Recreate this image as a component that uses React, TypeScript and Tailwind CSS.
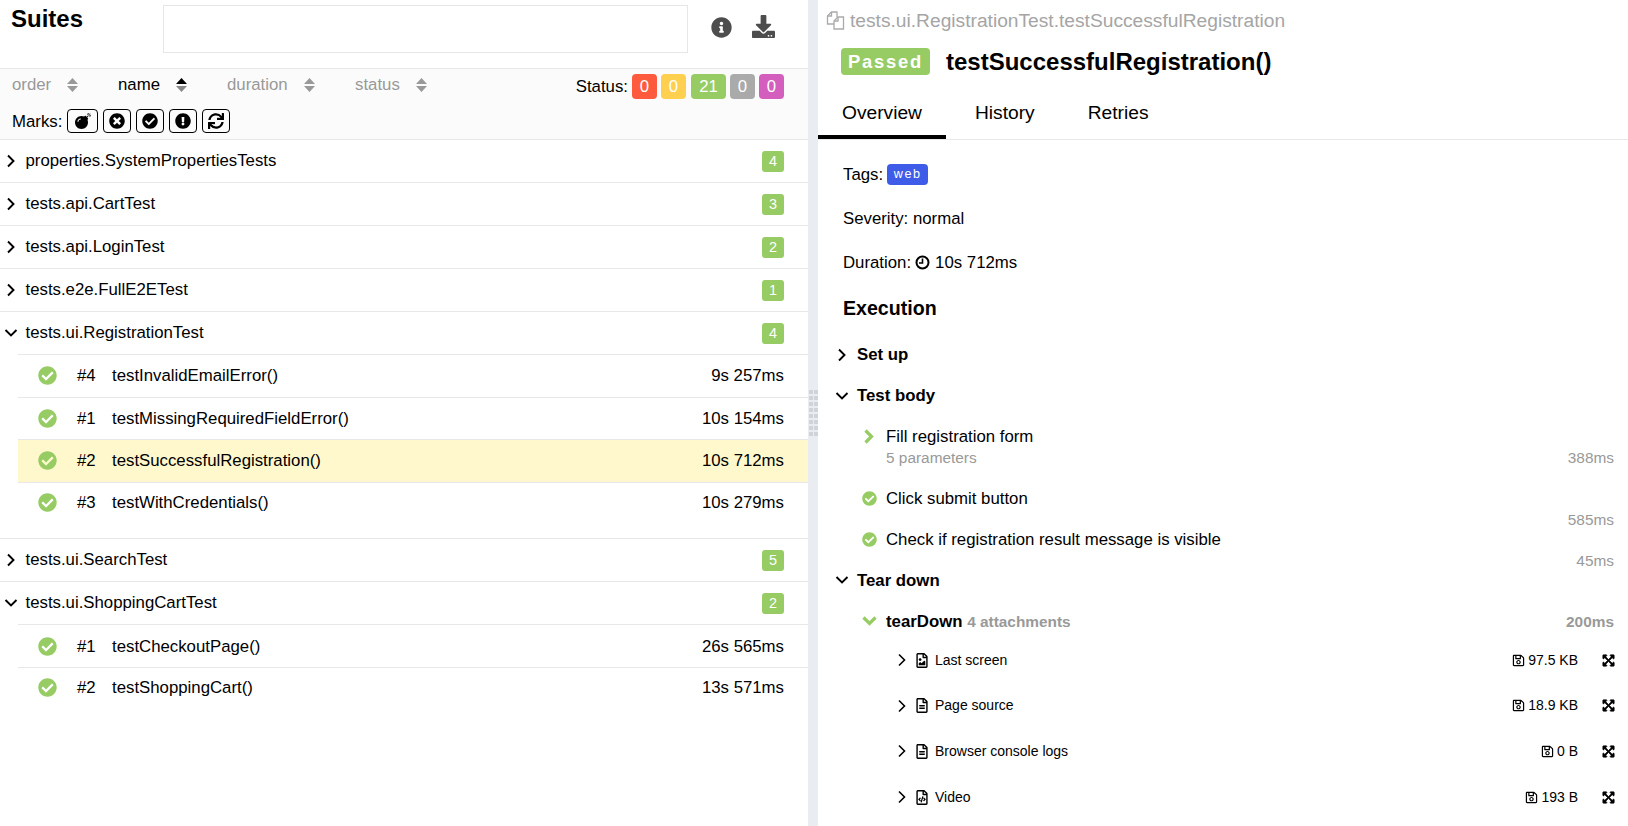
import {
  FaBomb,
  FaCheckCircle,
  FaDownload,
  FaExclamationCircle,
  FaExpandArrowsAlt,
  FaInfoCircle,
  FaRegFileAlt,
  FaRegFileCode,
  FaRegFileImage,
  FaRegSave,
  FaSync,
  FaTimesCircle,
} from 'react-icons/fa';
import type { IconType } from 'react-icons';

interface TestRow {
  order: string;
  name: string;
  duration: string;
  selected?: boolean;
}

interface Suite {
  name: string;
  count: number;
  tests?: TestRow[];
  extraSpace?: boolean;
}

const suites: Suite[] = [
  { name: 'properties.SystemPropertiesTests', count: 4 },
  { name: 'tests.api.CartTest', count: 3 },
  { name: 'tests.api.LoginTest', count: 2 },
  { name: 'tests.e2e.FullE2ETest', count: 1 },
  {
    name: 'tests.ui.RegistrationTest',
    count: 4,
    extraSpace: true,
    tests: [
      { order: '#4', name: 'testInvalidEmailError()', duration: '9s 257ms' },
      { order: '#1', name: 'testMissingRequiredFieldError()', duration: '10s 154ms' },
      { order: '#2', name: 'testSuccessfulRegistration()', duration: '10s 712ms', selected: true },
      { order: '#3', name: 'testWithCredentials()', duration: '10s 279ms' },
    ],
  },
  { name: 'tests.ui.SearchTest', count: 5 },
  {
    name: 'tests.ui.ShoppingCartTest',
    count: 2,
    tests: [
      { order: '#1', name: 'testCheckoutPage()', duration: '26s 565ms' },
      { order: '#2', name: 'testShoppingCart()', duration: '13s 571ms' },
    ],
  },
];

const sorters = [
  { label: 'order', className: 'w-[106px] pl-[12px]' },
  { label: 'name', active: true, className: 'w-[109px] pl-[12px]' },
  { label: 'duration', className: 'w-[128px] pl-[12px]' },
  { label: 'status', className: 'w-[100px] pl-[12px]' },
];

const statuses = [
  { value: '0', className: 'bg-[#fd5a3e] w-[25px]' },
  { value: '0', className: 'bg-[#ffd050] w-[25px]' },
  { value: '21', className: 'bg-[#97cc64] w-[35px] ml-[1px]' },
  { value: '0', className: 'bg-[#aaaaaa] w-[25px]' },
  { value: '0', className: 'bg-[#d35ebe] w-[25px]' },
];

const markIcons: { icon: IconType; className: string }[] = [
  { icon: FaBomb, className: 'w-[31px]' },
  { icon: FaTimesCircle, className: 'w-[28px]' },
  { icon: FaCheckCircle, className: 'w-[28px]' },
  { icon: FaExclamationCircle, className: 'w-[28px]' },
  { icon: FaSync, className: 'w-[28px]' },
];

const attachments = [
  { name: 'Last screen', size: '97.5 KB', icon: FaRegFileImage },
  { name: 'Page source', size: '18.9 KB', icon: FaRegFileAlt },
  { name: 'Browser console logs', size: '0 B', icon: FaRegFileAlt },
  { name: 'Video', size: '193 B', icon: FaRegFileCode },
];

function AngleRight({ thin }: { thin?: boolean }) {
  return (
    <svg viewBox="0 0 14 14" className="w-[14px] h-[14px] shrink-0" fill="none" stroke="currentColor" strokeWidth={thin ? 1.6 : 1.9}>
      <path d="M4 1.5 9.5 7 4 12.5" />
    </svg>
  );
}

function AngleDown() {
  return (
    <svg viewBox="0 0 14 14" className="w-[14px] h-[14px] shrink-0" fill="none" stroke="currentColor" strokeWidth={1.9}>
      <path d="M1.5 4 7 9.5 12.5 4" />
    </svg>
  );
}

function SortIcon({ active }: { active?: boolean }) {
  return (
    <svg viewBox="0 0 11 14" className="w-[11px] h-[14px] shrink-0">
      <path d="M5.5 0 11 6H0Z" fill={active ? '#000000' : '#999999'} />
      <path d="M5.5 14 0 8H11Z" fill={active ? '#888888' : '#999999'} />
    </svg>
  );
}

function FilesIcon() {
  return (
    <svg viewBox="0 0 19 19" className="w-[19px] h-[19px] shrink-0" fill="none" stroke="#aaaaaa" strokeWidth={1.3}>
      <path d="M8 13H1.5V5L5.5 1H11V6" />
      <path d="M5.5 1V5H1.5" />
      <path d="M8 10 12 6H17.5V18H8Z" />
      <path d="M12 6V10H8" />
    </svg>
  );
}

function ClockIcon() {
  return (
    <svg viewBox="0 0 15 15" className="ml-[4px] mr-[5px] w-[15px] h-[15px] shrink-0" fill="none" stroke="currentColor" strokeWidth={2}>
      <circle cx="7.5" cy="7.5" r="6" />
      <path d="M7.5 3.5V8H4" strokeWidth={1.6} />
    </svg>
  );
}

function SuiteRow({ suite }: { suite: Suite }) {
  return (
    <div className="border-b border-[#e8e8e8] last:border-b-0">
      <div className="flex h-[42px] items-center pb-[1px] pl-[4px] pr-[24px]">
        {suite.tests ? <AngleDown /> : <AngleRight />}
        <span className="ml-[7.5px] flex-1">{suite.name}</span>
        <span className="mt-[2px] flex h-[21px] w-[22px] items-center justify-center rounded-[3px] bg-[#97cc64] text-[14.4px] text-white">
          {suite.count}
        </span>
      </div>
      {suite.tests && (
        <div className={suite.extraSpace ? 'pb-[14px]' : ''}>
          {suite.tests.map((test) => (
            <div
              key={test.order}
              className={`ml-[18px] flex h-[42.6px] items-center border-t border-[#e8e8e8] pr-[24px] last:pb-[2px] ${
                test.selected ? 'bg-[#fff8cc]' : ''
              }`}
            >
              <FaCheckCircle className="ml-[20px] w-[19px] h-[19px] text-[#97cc64]" />
              <span className="ml-[20px] w-[35px]">{test.order}</span>
              <span className="flex-1">{test.name}</span>
              <span>{test.duration}</span>
            </div>
          ))}
        </div>
      )}
    </div>
  );
}

function SuitesPane() {
  return (
    <div className="w-[808px] shrink-0">
      <div className="flex h-[69px] border-b border-[#e8e8e8]">
        <h2 className="w-[163px] pl-[11px] pt-[4px] text-[24px] font-bold leading-[30px]">Suites</h2>
        <div className="mt-[5px] h-[48px] w-[525px] border border-[#e6e6e6]" />
        <div className="ml-[23px] mt-[17px] flex items-start text-[#4d4d4d]">
          <FaInfoCircle className="w-[21px] h-[21px]" />
          <FaDownload className="ml-[20px] -mt-[2px] w-[23px] h-[23px]" />
        </div>
      </div>
      <div className="h-[71px] border-b border-[#e8e8e8] bg-[#fbfbfb]">
        <div className="flex h-[40px] items-start pt-[5px]">
          {sorters.map((sorter) => (
            <div
              key={sorter.label}
              className={`flex items-center gap-[16px] ${sorter.className} ${
                sorter.active ? 'text-black' : 'text-[#999999]'
              }`}
            >
              {sorter.label}
              <SortIcon active={sorter.active} />
            </div>
          ))}
          <div className="ml-auto mr-[24px] flex items-center gap-[4px]">
            <span>Status:</span>
            {statuses.map((status, index) => (
              <span
                key={index}
                className={`flex h-[25px] items-center justify-center rounded-[4px] text-white ${status.className}`}
              >
                {status.value}
              </span>
            ))}
          </div>
        </div>
        <div className="flex items-center pl-[12px]">
          <span className="mr-[5px]">Marks:</span>
          <div className="flex gap-[5px]">
            {markIcons.map(({ icon: Icon, className }, index) => (
              <span
                key={index}
                className={`flex h-[24px] items-center justify-center rounded-[4px] border border-black ${className}`}
              >
                <Icon className="w-[16px] h-[16px]" />
              </span>
            ))}
          </div>
        </div>
      </div>
      {suites.map((suite) => (
        <SuiteRow key={suite.name} suite={suite} />
      ))}
    </div>
  );
}

function Splitter() {
  return (
    <div className="flex w-[10px] shrink-0 flex-col items-center justify-center bg-[#e9edf2]">
      <div className="grid grid-cols-2 gap-x-[1px] gap-y-[2px]">
        {Array.from({ length: 16 }).map((_, i) => (
          <span key={i} className="w-[4px] h-[4px] bg-[#d0d3d7]" />
        ))}
      </div>
    </div>
  );
}

function StageHeader({ title, open }: { title: string; open?: boolean }) {
  return (
    <div className="flex h-[41px] items-center pl-[17px] font-bold">
      {open ? <AngleDown /> : <AngleRight />}
      <span className="ml-[8px]">{title}</span>
    </div>
  );
}

function StepRow({ title, duration, sub }: { title: string; duration: string; sub?: string }) {
  return (
    <div className={`pl-[44px] pr-[14px] pt-[10px] ${sub ? 'h-[61.5px]' : 'h-[41px]'}`}>
      <div className="flex h-[21px] items-center">
        <span className="flex w-[24px] items-center">
          {sub ? (
            <svg viewBox="0 0 12 15" className="ml-[1px] w-[12px] h-[15px]" fill="none" stroke="#97cc64" strokeWidth={3.2}>
              <path d="M2.5 1.5 8.5 7.5 2.5 13.5" />
            </svg>
          ) : (
            <FaCheckCircle className="w-[15px] h-[15px] text-[#97cc64]" />
          )}
        </span>
        {title}
      </div>
      <div className="flex h-[21px] items-center justify-between pl-[24px] text-[15.4px] text-[#999999]">
        <span>{sub}</span>
        <span>{duration}</span>
      </div>
    </div>
  );
}

function DetailPane() {
  return (
    <div className="min-w-0 flex-1">
      <div className="flex h-[41px] items-center pl-[8px] text-[19.2px] text-[#a5a5a5]">
        <FilesIcon />
        <span className="ml-[5px]">tests.ui.RegistrationTest.testSuccessfulRegistration</span>
      </div>
      <div className="flex h-[41px] items-center pl-[23px]">
        <span className="flex h-[27px] w-[89px] items-center justify-center rounded-[4px] bg-[#97cc64] text-[18.4px] font-bold tracking-[1.8px] text-white">
          Passed
        </span>
        <span className="ml-[16px] pb-[1px] text-[24px] font-bold">testSuccessfulRegistration()</span>
      </div>
      <div className="flex h-[58px] border-b border-[#e8e8e8] text-[19.2px]">
        <div className="flex h-[57px] w-[128px] items-center justify-center border-b-[4px] border-black pt-[7px]">Overview</div>
        <div className="flex h-[57px] items-center border-b-[4px] border-transparent pl-[29px] pt-[7px]">History</div>
        <div className="flex h-[57px] items-center border-b-[4px] border-transparent pl-[53px] pt-[7px]">Retries</div>
      </div>
      <div className="pl-[25px] pt-[20px]">
        <div className="flex h-[28px] items-center">
          Tags:
          <span className="ml-[4px] flex h-[21px] w-[41px] items-center justify-center rounded-[4px] bg-[#3f5ce8] text-[12.6px] tracking-[1.5px] text-white">
            web
          </span>
        </div>
        <div className="mt-[16px] flex h-[28px] items-center">Severity: normal</div>
        <div className="mt-[16px] flex h-[28px] items-center">
          Duration:
          <ClockIcon />
          10s 712ms
        </div>
        <h3 className="mt-[18px] text-[19.6px] font-bold leading-[28px]">Execution</h3>
      </div>
      <div className="pt-[12px]">
        <StageHeader title="Set up" />
        <StageHeader title="Test body" open />
        <StepRow title="Fill registration form" sub="5 parameters" duration="388ms" />
        <StepRow title="Click submit button" duration="585ms" />
        <StepRow title="Check if registration result message is visible" duration="45ms" />
        <StageHeader title="Tear down" open />
        <div className="flex h-[37px] justify-between pl-[44px] pr-[14px] pt-[10px] font-bold">
          <span className="flex h-[21px] items-center">
            <svg viewBox="0 0 15 10" className="mr-[9px] w-[15px] h-[10px]" fill="none" stroke="#97cc64" strokeWidth={3.2}>
              <path d="M1.5 1.5 7.5 7.5 13.5 1.5" />
            </svg>
            tearDown&nbsp;<span className="text-[15.4px] text-[#999999]">4 attachments</span>
          </span>
          <span className="text-[15.4px] text-[#999999]">200ms</span>
        </div>
        {attachments.map(({ name, size, icon: Icon }) => (
          <div key={name} className="flex h-[45.6px] items-center pl-[77px] pr-[13px] text-[14px]">
            <AngleRight thin />
            <Icon className="ml-[7px] w-[12px] h-[15px]" />
            <span className="ml-[7px] flex-1">{name}</span>
            <FaRegSave className="mr-[3px] w-[13px] h-[13px]" />
            <span>{size}</span>
            <FaExpandArrowsAlt className="ml-[24px] w-[13px] h-[13px]" stroke="currentColor" strokeWidth={24} />
          </div>
        ))}
      </div>
    </div>
  );
}

export default function App() {
  return (
    <div className="flex h-[826px] overflow-hidden bg-white font-['Liberation_Sans',Arial,sans-serif] text-[16.8px] leading-[21px] text-black">
      <SuitesPane />
      <Splitter />
      <DetailPane />
    </div>
  );
}
